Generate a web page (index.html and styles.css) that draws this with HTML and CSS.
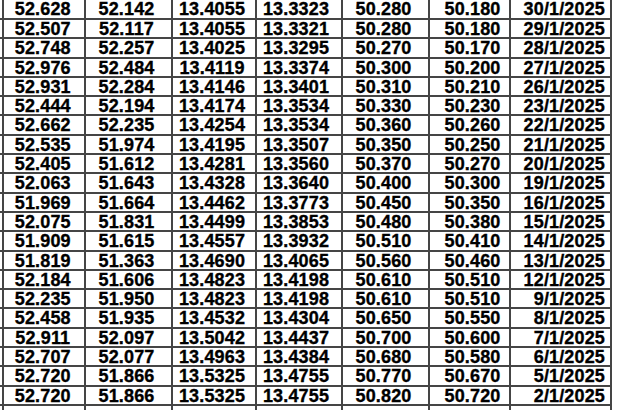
FILE: index.html
```html
<!DOCTYPE html>
<html>
<head>
<meta charset="utf-8">
<link rel="stylesheet" href="styles.css">
</head>
<body>
<div class="sheet">
  <div class="row first"><div class="c edge"></div><div class="c c1">52.628</div><div class="c c2">52.142</div><div class="c c3">13.4055</div><div class="c c4">13.3323</div><div class="c c5">50.280</div><div class="c c6">50.180</div><div class="c c7">30/1/2025</div></div>
  <div class="row"><div class="c edge"></div><div class="c c1">52.507</div><div class="c c2">52.117</div><div class="c c3">13.4055</div><div class="c c4">13.3321</div><div class="c c5">50.280</div><div class="c c6">50.180</div><div class="c c7">29/1/2025</div></div>
  <div class="row"><div class="c edge"></div><div class="c c1">52.748</div><div class="c c2">52.257</div><div class="c c3">13.4025</div><div class="c c4">13.3295</div><div class="c c5">50.270</div><div class="c c6">50.170</div><div class="c c7">28/1/2025</div></div>
  <div class="row"><div class="c edge"></div><div class="c c1">52.976</div><div class="c c2">52.484</div><div class="c c3">13.4119</div><div class="c c4">13.3374</div><div class="c c5">50.300</div><div class="c c6">50.200</div><div class="c c7">27/1/2025</div></div>
  <div class="row"><div class="c edge"></div><div class="c c1">52.931</div><div class="c c2">52.284</div><div class="c c3">13.4146</div><div class="c c4">13.3401</div><div class="c c5">50.310</div><div class="c c6">50.210</div><div class="c c7">26/1/2025</div></div>
  <div class="row"><div class="c edge"></div><div class="c c1">52.444</div><div class="c c2">52.194</div><div class="c c3">13.4174</div><div class="c c4">13.3534</div><div class="c c5">50.330</div><div class="c c6">50.230</div><div class="c c7">23/1/2025</div></div>
  <div class="row"><div class="c edge"></div><div class="c c1">52.662</div><div class="c c2">52.235</div><div class="c c3">13.4254</div><div class="c c4">13.3534</div><div class="c c5">50.360</div><div class="c c6">50.260</div><div class="c c7">22/1/2025</div></div>
  <div class="row"><div class="c edge"></div><div class="c c1">52.535</div><div class="c c2">51.974</div><div class="c c3">13.4195</div><div class="c c4">13.3507</div><div class="c c5">50.350</div><div class="c c6">50.250</div><div class="c c7">21/1/2025</div></div>
  <div class="row"><div class="c edge"></div><div class="c c1">52.405</div><div class="c c2">51.612</div><div class="c c3">13.4281</div><div class="c c4">13.3560</div><div class="c c5">50.370</div><div class="c c6">50.270</div><div class="c c7">20/1/2025</div></div>
  <div class="row"><div class="c edge"></div><div class="c c1">52.063</div><div class="c c2">51.643</div><div class="c c3">13.4328</div><div class="c c4">13.3640</div><div class="c c5">50.400</div><div class="c c6">50.300</div><div class="c c7">19/1/2025</div></div>
  <div class="row"><div class="c edge"></div><div class="c c1">51.969</div><div class="c c2">51.664</div><div class="c c3">13.4462</div><div class="c c4">13.3773</div><div class="c c5">50.450</div><div class="c c6">50.350</div><div class="c c7">16/1/2025</div></div>
  <div class="row"><div class="c edge"></div><div class="c c1">52.075</div><div class="c c2">51.831</div><div class="c c3">13.4499</div><div class="c c4">13.3853</div><div class="c c5">50.480</div><div class="c c6">50.380</div><div class="c c7">15/1/2025</div></div>
  <div class="row"><div class="c edge"></div><div class="c c1">51.909</div><div class="c c2">51.615</div><div class="c c3">13.4557</div><div class="c c4">13.3932</div><div class="c c5">50.510</div><div class="c c6">50.410</div><div class="c c7">14/1/2025</div></div>
  <div class="row"><div class="c edge"></div><div class="c c1">51.819</div><div class="c c2">51.363</div><div class="c c3">13.4690</div><div class="c c4">13.4065</div><div class="c c5">50.560</div><div class="c c6">50.460</div><div class="c c7">13/1/2025</div></div>
  <div class="row"><div class="c edge"></div><div class="c c1">52.184</div><div class="c c2">51.606</div><div class="c c3">13.4823</div><div class="c c4">13.4198</div><div class="c c5">50.610</div><div class="c c6">50.510</div><div class="c c7">12/1/2025</div></div>
  <div class="row"><div class="c edge"></div><div class="c c1">52.235</div><div class="c c2">51.950</div><div class="c c3">13.4823</div><div class="c c4">13.4198</div><div class="c c5">50.610</div><div class="c c6">50.510</div><div class="c c7">9/1/2025</div></div>
  <div class="row"><div class="c edge"></div><div class="c c1">52.458</div><div class="c c2">51.935</div><div class="c c3">13.4532</div><div class="c c4">13.4304</div><div class="c c5">50.650</div><div class="c c6">50.550</div><div class="c c7">8/1/2025</div></div>
  <div class="row"><div class="c edge"></div><div class="c c1">52.911</div><div class="c c2">52.097</div><div class="c c3">13.5042</div><div class="c c4">13.4437</div><div class="c c5">50.700</div><div class="c c6">50.600</div><div class="c c7">7/1/2025</div></div>
  <div class="row"><div class="c edge"></div><div class="c c1">52.707</div><div class="c c2">52.077</div><div class="c c3">13.4963</div><div class="c c4">13.4384</div><div class="c c5">50.680</div><div class="c c6">50.580</div><div class="c c7">6/1/2025</div></div>
  <div class="row"><div class="c edge"></div><div class="c c1">52.720</div><div class="c c2">51.866</div><div class="c c3">13.5325</div><div class="c c4">13.4755</div><div class="c c5">50.770</div><div class="c c6">50.670</div><div class="c c7">5/1/2025</div></div>
  <div class="row"><div class="c edge"></div><div class="c c1">52.720</div><div class="c c2">51.866</div><div class="c c3">13.5325</div><div class="c c4">13.4755</div><div class="c c5">50.820</div><div class="c c6">50.720</div><div class="c c7">2/1/2025</div></div>
  <div class="row"><div class="c edge"></div><div class="c c1"></div><div class="c c2"></div><div class="c c3"></div><div class="c c4"></div><div class="c c5"></div><div class="c c6"></div><div class="c c7"></div></div>
</div>
</body>
</html>
```
FILE: styles.css
```css
html, body {
  margin: 0;
  padding: 0;
  background: #ffffff;
  overflow: hidden;
}
.sheet {
  width: 617px;
  height: 410px;
  overflow: hidden;
  font-family: "Liberation Sans", Arial, sans-serif;
  font-weight: bold;
  font-size: 18px;
  letter-spacing: 0.15px;
  color: #000000;
  -webkit-text-stroke: 0.35px #000000;
}
.row {
  display: grid;
  grid-template-columns: 4px 81.5px 87.5px 84px 86px 87px 81px 101px;
  height: 19.3px;
}
.row.first {
  height: 20px;
}
.c {
  box-sizing: border-box;
  border-right: 2px solid #454545;
  border-bottom: 2px solid #454545;
  text-align: center;
  line-height: 17.3px;
  padding-top: 1px;
  white-space: nowrap;
  overflow: hidden;
}
.c.edge {
  padding: 0;
}
.c1 { padding-right: 2px; }
.c2 { padding-right: 3.5px; }
.c3 { padding-right: 4px; }
.c4 { padding-right: 6px; }
.c5 { padding-right: 4px; }
.c6 { padding-left: 6px; }
.c7 {
  text-align: right;
  padding-right: 5px;
}
```
